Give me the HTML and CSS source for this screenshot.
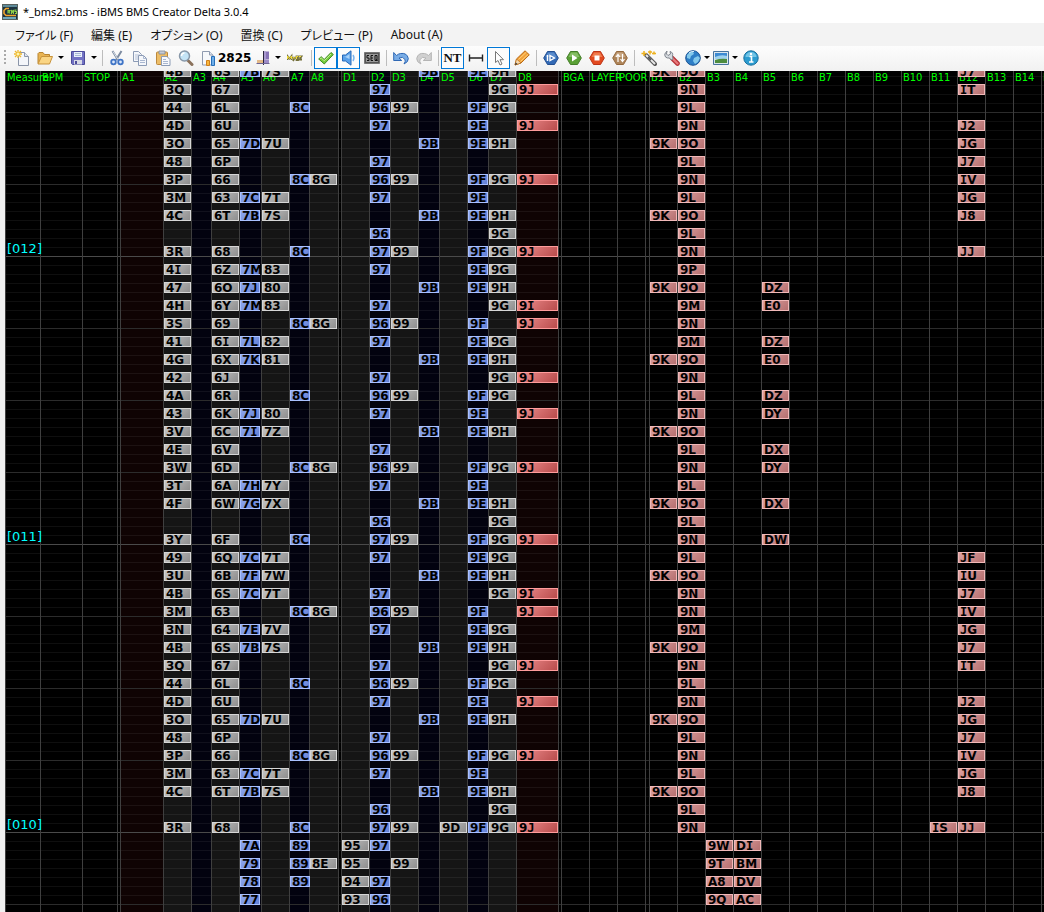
FILE: index.html
```html
<!DOCTYPE html>
<html lang="ja">
<head>
<meta charset="utf-8">
<title>iBMS BMS Creator Delta</title>
<link rel="stylesheet" href="styles.css">
</head>
<body>
<div class="app">
<header class="titlebar">
  <svg class="logo" viewBox="0 0 16 16"><rect width="16" height="16" fill="#1b3340"/><path d="M1 1h14v2H1z" fill="#5d8a99"/><path d="M1 13h13v2H1z" fill="#6ea9bf"/><rect x=".5" y=".5" width="15" height="15" fill="none" stroke="#59625f"/><path d="M7 4.500H4L2 6.500v3l2 2h10" fill="none" stroke="#f0a32c" stroke-width="1.600"/><path d="M6 9.500v-3h2l-1 1.500 1 1.500M9.500 10V6l1 2 1-2v4M14.500 6H13v1.500h1.500V9.500H13" fill="none" stroke="#8fcf4a" stroke-width="1.100"/></svg>
  <h1>*_bms2.bms - iBMS BMS Creator Delta 3.0.4</h1>
</header>
<nav class="menubar">
  <button>ファイル (F)</button><button>編集 (E)</button><button>オプション (O)</button><button>置換 (C)</button><button>プレビュー (P)</button><button>About (A)</button>
</nav>
<div class="toolbar" role="toolbar" aria-label="Main">
  <span class="grip"></span>
  <button class="tool" aria-label="New"><svg viewBox="0 0 16 16"><path d="M4.500 2.500h6l4 4v9h-10z" fill="#f4f6fa" stroke="#8b95a8"/><path d="M10.500 2.500v4h4" fill="#dfe5ee" stroke="#8b95a8"/><path d="M4 0v8M0 4h8M1 1l6 6M7 1L1 7" stroke="#efb92d" stroke-width="1.300"/><circle cx="4" cy="4" r="1.500" fill="#fff6b0"/></svg></button>
  <button class="tool" aria-label="Open"><svg viewBox="0 0 16 16"><path d="M1 13.500V3.500l1-1h4l1.500 2h5v3" fill="#e9b453" stroke="#b98532"/><path d="M1 14L4.500 6.500h11L12.500 14z" fill="#fad584" stroke="#c8933c"/></svg></button><button class="drop" aria-label="Recent files"></button>
  <button class="tool" aria-label="Save"><svg viewBox="0 0 16 16"><path d="M1.500 1.500h13v13h-12l-1-1z" fill="#7272c4" stroke="#4b4b99"/><path d="M4 2h8v5H4z" fill="#e9f0fa"/><path d="M5 3.500h6M5 5.500h6" stroke="#a8b8d4"/><path d="M4 10h8v4.500H4z" fill="#d8dae6"/><path d="M5 11h2v3H5z" fill="#4b4b99"/></svg></button><button class="drop" aria-label="Save options"></button>
  <span class="sep"></span>
  <button class="tool" aria-label="Cut"><svg viewBox="0 0 16 16"><path d="M3.500 1l5.500 9M12.500 1L7 10" stroke="#7d8ba0" stroke-width="2"/><path d="M4 1.500l5 8" stroke="#d9e1ea"/><circle cx="4.500" cy="12" r="2.300" fill="#dce8fa" stroke="#3f74c6" stroke-width="1.800"/><circle cx="11.500" cy="12" r="2.300" fill="#dce8fa" stroke="#3f74c6" stroke-width="1.800"/></svg></button>
  <button class="tool" aria-label="Copy"><svg viewBox="0 0 16 16"><path d="M1.500 1.500h5l3 3v7h-8z" fill="#f5f7fb" stroke="#8c9bb5"/><path d="M3 5h5M3 7h3M3 9h3" stroke="#b5c1d6"/><path d="M6.500 5.500h5l3 3v7h-8z" fill="#f5f7fb" stroke="#8c9bb5"/><path d="M11.500 5.500v3h3M8 10.500h5M8 12.500h5" fill="none" stroke="#a9b7d0"/></svg></button>
  <button class="tool" aria-label="Paste"><svg viewBox="0 0 16 16"><rect x="1.500" y="2" width="11" height="12.500" rx="1" fill="#edbd67" stroke="#bc883c"/><path d="M4 1h6v3H4z" fill="#c6cbd6" stroke="#818b9d" stroke-width=".8"/><path d="M6.500 6.500h5.500l3 3v6H6.500z" fill="#f8f9fc" stroke="#8c9bb5"/><path d="M8 9.500h3M8 11.500h5M8 13.500h5" stroke="#a9b7d0"/></svg></button>
  <button class="tool" aria-label="Find"><svg viewBox="0 0 16 16"><path d="M10 10.500l4 4" stroke="#8a715b" stroke-width="3" stroke-linecap="round"/><circle cx="6.500" cy="6" r="5" fill="#c4e4f6" stroke="#8797a8" stroke-width="1.500"/><path d="M3.500 6a3 3 0 0 1 3-3" fill="none" stroke="#fff" stroke-width="1.500"/></svg></button>
  <button class="tool stats" aria-label="Statistics 2825"><svg viewBox="0 0 16 16"><path d="M2.500 1.500h7l3.500 3.500v10h-10.500z" fill="#f6f8fb" stroke="#8f9bb0"/><path d="M9.500 1.500v3.500h3.500" fill="#dfe5ee" stroke="#8f9bb0"/><path d="M6.500 10.500h3v5h-3z" fill="#f8b73c" stroke="#cf7e1b"/><path d="M11.500 6.500h3v9h-3z" fill="#6faee8" stroke="#266fb9"/></svg><span>2825</span></button>
  <button class="tool narrow" aria-label="Note tool"><svg viewBox="0 0 16 16"><path d="M8 1.500h5v8H8z" fill="#8874b8"/><path d="M8 1.500h2v8H8z" fill="#a899cf"/><path d="M1 10h7v3H1z" fill="#e3b987"/><path d="M8 10h5v4H8z" fill="#9c8bc6"/><path d="M7.500 1v14" stroke="#28243c"/><path d="M.5 13.500h13" stroke="#6d6494"/></svg></button><button class="drop slim" aria-label="Note tool options"></button>
  <button class="tool wide" aria-label="My O2"><svg viewBox="0 0 16 16"><path d="M.5 10V6l2 2.500 2-2.500v4M6 7l1 2L8.500 7M7 9l-1 2M11 6.500H9.500V10H11zM12 6.500h2.500L12.500 9.500h2.500" fill="none" stroke="#74703c" stroke-width="1.800"/><path d="M.5 9V6l2 2.500 2-2.500v3M6 7l1 1.500L8.500 7M11 6.500H9.500V9M12 6.500h2" fill="none" stroke="#f2dc3c"/></svg></button>
  <span class="sep"></span>
  <button class="tool on" aria-label="Error check" aria-pressed="true"><svg viewBox="0 0 16 16"><path d="M.7 9l2.500-2.300 3 2.800L13 2.500l2.300 2-9 9.500z" fill="#78cd3c" stroke="#3e8c22"/><path d="M2 8.800l1.200-1 3 3L13 4" fill="none" stroke="#c0ed93"/></svg></button>
  <button class="tool on" aria-label="Preview on click" aria-pressed="true"><svg viewBox="0 0 16 16"><path d="M1.500 5h3L10 .8v14.400L4.500 11h-3z" fill="#5aa1ea" stroke="#2769b8"/><path d="M3 6.500h2L8.500 4v5z" fill="#a9d3fa"/><path d="M12 5q2 3 0 6" fill="none" stroke="#77b3ef" stroke-width="1.400"/></svg></button>
  <button class="tool" aria-label="Sequence"><svg viewBox="0 0 16 16"><path d="M.5 2.500h15v11H.5z" fill="#555" stroke="#777"/><path d="M2 4h12v8H2z" fill="#999"/><path d="M5 5.500H3v2.500h2v2.500H3M9 5.500H7v5h2M7 8h2M11 5.500h2v5h-2zM12 9l1.500 2" fill="none" stroke="#111"/></svg></button>
  <span class="sep"></span>
  <button class="tool" aria-label="Undo"><svg viewBox="0 0 16 16"><path d="M.7 2.500v8h8L6 8q4-2 6 1.500.8 2-1 4.500 4.500-2 4.300-5.500Q14 2.500 7.500 3.500q-2 .3-4 2z" fill="#78ace6" stroke="#2f68b4"/></svg></button>
  <button class="tool" aria-label="Redo"><svg viewBox="0 0 16 16"><path d="M15.300 2.500v8h-8L10 8Q6 6 4 9.500q-.8 2 1 4.500Q.5 12 .7 8.500 2 2.500 8.500 3.500q2 .3 4 2z" fill="#d0d0d0" stroke="#b5b5b5"/></svg></button>
  <span class="sep"></span>
  <button class="tool on nt" aria-pressed="true">NT</button>
  <button class="tool" aria-label="Snap"><svg viewBox="0 0 16 16"><path d="M1.500 4.500v7M14.500 4.500v7M2 8h12" stroke="#222" stroke-width="1.400"/></svg></button>
  <button class="tool on" aria-label="Select" aria-pressed="true"><svg viewBox="0 0 16 16"><path d="M4.500 1.500v11l2.500-2 2 4.500 2-1-2-4.300h3.500z" fill="#fff" stroke="#777"/></svg></button>
  <button class="tool" aria-label="Write"><svg viewBox="0 0 16 16"><path d="M1 15l1.500-6L11 .8l4.300 4L7 13z" fill="#f2a13a" stroke="#b96a16"/><path d="M4.500 9.500l8-7.500M6.500 11.500l7.500-7" stroke="#ffd17a"/><path d="M1 15l1.500-6 4.500 4z" fill="#f5dcb4" stroke="#b96a16" stroke-width=".7"/><path d="M1 15l.7-2.500L3.500 14z" fill="#333"/></svg></button>
  <span class="sep"></span>
  <button class="tool" aria-label="Play from start"><svg viewBox="0 0 16 16"><path d="M4.500 1.500h7L15.300 8l-3.800 6.500h-7L.7 8z" fill="#3269b5" stroke="#234f91"/><path d="M5 2.500h6L13.500 7h-11z" fill="#5a8ccc"/><path d="M4.500 5v6" stroke="#fff" stroke-width="1.500"/><path d="M7 5.500L11.500 8 7 10.500z" fill="none" stroke="#fff" stroke-width="1.400"/></svg></button>
  <button class="tool" aria-label="Play"><svg viewBox="0 0 16 16"><path d="M4.500 1.500h7L15.300 8l-3.800 6.500h-7L.7 8z" fill="#5aa035" stroke="#447e28"/><path d="M5 2.500h6L13.500 7h-11z" fill="#85be64"/><path d="M6 4.500L11.500 8 6 11.500z" fill="#fff"/></svg></button>
  <button class="tool" aria-label="Stop"><svg viewBox="0 0 16 16"><path d="M4.500 1.500h7L15.300 8l-3.800 6.500h-7L.7 8z" fill="#e24a20" stroke="#bd3416"/><path d="M5 2.500h6L13.500 7h-11z" fill="#ef7b4d"/><path d="M5.500 5.500h5v5h-5z" fill="#fff"/></svg></button>
  <button class="tool" aria-label="Transfer"><svg viewBox="0 0 16 16"><path d="M4.500 1.500h7L15.300 8l-3.800 6.500h-7L.7 8z" fill="#ae855a" stroke="#94683d"/><path d="M5 2.500h6L13.500 7h-11z" fill="#c8a681"/><path d="M6 12V5M4 7l2-2.500L8 7M10.500 4v7M8.500 9l2 2.500 2-2.500" fill="none" stroke="#fff" stroke-width="1.200"/></svg></button>
  <span class="sep"></span>
  <button class="tool" aria-label="Options wizard"><svg viewBox="0 0 16 16"><path d="M5 5l9 9" stroke="#555" stroke-width="4" stroke-linecap="round"/><path d="M5 5l9 9" stroke="#e8e8e8" stroke-width="2"/><path d="M7 7l3 3" stroke="#555" stroke-width="2"/><path d="M3 1v5M.5 3.500h5M7 2h4M9 .5v4M11 3.500h4M13 1.500v3" stroke="#eeb21f" stroke-width="1.500"/></svg></button>
  <button class="tool" aria-label="Settings"><svg viewBox="0 0 16 16"><path d="M8 8l5.500 5.500" stroke="#b53035" stroke-width="4.600" stroke-linecap="round"/><path d="M8 8l5.500 5.500" stroke="#e8777a" stroke-width="2.400" stroke-linecap="round"/><path d="M3 1l-.5 3L4 5.500 6.500 4 6 1.500q3.500 1 2.500 4.500L9 9 7 10 5.500 8Q.5 8.500.8 4z" fill="#d6dadf" stroke="#7f858e"/></svg></button>
  <button class="tool narrow" aria-label="Language"><svg viewBox="0 0 16 16"><circle cx="8" cy="8" r="7.300" fill="#2e7fc7" stroke="#1c5595"/><path d="M2 5q3-4 6-3l1 2-3 2-1 3-3-1zM9 8l4-2 2 2-2 4-3 2-2-3z" fill="#83c9ec"/><path d="M4 3q2-2 5-1.500" fill="none" stroke="#d9f1ff"/></svg></button><button class="drop slim" aria-label="Language list"></button>
  <button class="tool narrow" aria-label="Theme"><svg viewBox="0 0 16 16"><path d="M.5 1.500h15v13H.5z" fill="#dbe7ef" stroke="#47749e"/><path d="M2 3h12v6H2z" fill="#3d8bd3"/><path d="M2 7q6-3 12-1v3H2z" fill="#9ed2ef"/><path d="M2 10q6-2 12-1v4H2z" fill="#4d8c3e"/></svg></button><button class="drop slim" aria-label="Theme list"></button>
  <button class="tool" aria-label="About"><svg viewBox="0 0 16 16"><circle cx="8" cy="8" r="7.200" fill="#2c9cd0" stroke="#186f9e"/><path d="M2.500 7a5.500 5 0 0 1 11 0" fill="#71c4e6"/><path d="M6.500 6.500H8.500v5M6 12h4.500" fill="none" stroke="#fff" stroke-width="1.600"/><circle cx="8" cy="3.900" r="1.200" fill="#fff"/></svg></button>
</div>
<main class="editor"><div class="board" id="board"></div></main>
</div>
<script src="board.js"></script>
</body>
</html>
```
FILE: styles.css
```css
* { box-sizing: border-box; }
body { margin: 0; font-family: "Open Sans", "Noto Sans CJK JP", sans-serif; background: #f0f0f0; }
button { border: 0; margin: 0; padding: 0; background: none; color: inherit; font: inherit; }
.app { display: flex; flex-direction: column; height: 100vh; overflow: hidden; }

.titlebar { display: flex; align-items: center; gap: 5px; height: 23px; padding-left: 2px; background: #fff; flex: none; }
.logo { width: 16px; height: 16px; }
.titlebar h1 { margin: 0; font-size: 11px; font-weight: 400; color: #000; font-family: "Noto Sans", sans-serif; }

.menubar { display: flex; align-items: center; height: 23px; padding-left: 15px; gap: 18px; background: #f3f3f3; font-family: "Noto Sans", "Noto Sans CJK JP", sans-serif; font-size: 12px; font-feature-settings: "palt"; color: #111; flex: none; }
.menubar button { white-space: nowrap; font-feature-settings: inherit; }

.toolbar { display: flex; align-items: center; height: 25px; padding-bottom: 2px; background: linear-gradient(#fdfdfd, #f1f1f1); flex: none; }
.grip { width: 3px; height: 16px; margin: 0 3px 0 4px; background: radial-gradient(circle at 1px 1px, #aaa 1px, transparent 1px) 0 0 / 3px 4px; }
.tool { display: flex; align-items: center; justify-content: center; width: 23px; height: 22px; flex: none; }
.tool svg { width: 16px; height: 16px; flex: none; }
.narrow { width: 20px; }
.wide { width: 26px; }
.stats { width: 57px; justify-content: flex-start; padding-left: 3px; gap: 2px; font: bold 12px "DejaVu Sans", sans-serif; color: #000; }
.on { border: 1px solid #0078d7; background: #fcfcfc; }
.nt { font: bold 13px "Liberation Serif", serif; color: #111; }
.drop { display: flex; align-items: center; justify-content: center; width: 10px; height: 22px; flex: none; }
.drop::before { content: ""; border: 3px solid transparent; border-top-color: #000; border-bottom: 0; }
.slim { width: 8px; }
.sep { width: 6px; height: 16px; background: linear-gradient(#bdbdbd, #bdbdbd) center / 1px 100% no-repeat; flex: none; }

.editor { flex: 1; min-height: 0; margin-left: 5px; overflow: hidden; background: #000; }
/* The view is scrolled a few pixels into its first row. */
.board { display: flex; margin-top: -5px; min-width: max-content; }

.col {
  display: grid;
  grid-template-columns: minmax(0, 1fr);
  grid-template-rows: repeat(48, 18px);
  flex: none;
  border-left: 1px solid #3f3f3f;
  background-color: #000;
  background-image:
    linear-gradient(#4a4a4a 1px, transparent 1px),
    linear-gradient(#2c2c2c 1px, transparent 1px),
    linear-gradient(rgba(255, 255, 255, .06) 1px, transparent 1px);
  background-size: 100% 288px, 100% 72px, 100% 9px;
  background-position: 0 190px, 0 46px, 0 1px;
}
.w-gap { width: 3px; }
.w-gap-wide { width: 4px; }
.w-slim { width: 20px; }
.w-key { width: 21px; }
.w-black { width: 22px; }
.w-mid { width: 28px; }
.w-mid-wide { width: 29px; }
.w-measure { width: 35px; }
.w-tempo { width: 42px; }
.w-scratch { width: 43px; }
.grey { background-color: #151515; }
.blue { background-color: #02020f; }
.red { background-color: #0f0303; }

.head { grid-area: 1 / 1; align-self: end; z-index: 1; padding-left: 1px; font: 11px/12px "DejaVu Sans Condensed", "DejaVu Sans", sans-serif; color: #0f0; white-space: nowrap; }
.measure { grid-column: 1; z-index: 1; line-height: 6px; padding-left: 1px; font-family: "DejaVu Sans", sans-serif; font-size: 13px; color: #0ff; white-space: nowrap; }

.note {
  grid-column: 1;
  z-index: 2;
  height: 11px;
  padding-left: 1px;
  border: 1px solid;
  white-space: nowrap;
  font: bold 12px/10px "DejaVu Sans", sans-serif;
  color: #000;
}
/* Crossbar forms of I and J */
.slab { font-family: "DejaVu Sans Mono", monospace; line-height: 1px; }
.note-grey { width: 27px; border-color: #d6d6d6; background: linear-gradient(135deg, #c6c6c6, #8e8e8e); }
.note-blue { width: 20px; border-color: #a9c0ff; background: linear-gradient(135deg, #8fa8ec, #6480d6); }
.note-red { width: 41px; border-color: #ff9c9c; background: linear-gradient(135deg, #f09090, #b84c4c); }
.note-pink { width: 27px; border-color: #f1b9b9; background: linear-gradient(135deg, #dfa3a3, #b57070); }
```
FILE: board.js
```js
// Column: [title, width class, shade class, note class]
const columns = [
  ["Measure", "w-measure", "", ""], ["BPM", "w-tempo", "", ""], ["STOP", "w-measure", "", ""], ["", "w-gap", "", ""],
  ["A1", "w-scratch", "red", "note-red"], ["A2", "w-mid", "grey", "note-grey"], ["A3", "w-slim", "blue", "note-blue"],
  ["A4", "w-mid", "grey", "note-grey"], ["A5", "w-black", "blue", "note-blue"], ["A6", "w-mid", "grey", "note-grey"],
  ["A7", "w-slim", "blue", "note-blue"], ["A8", "w-mid-wide", "grey", "note-grey"], ["", "w-gap", "", ""],
  ["D1", "w-mid", "grey", "note-grey"], ["D2", "w-key", "blue", "note-blue"], ["D3", "w-mid", "grey", "note-grey"],
  ["D4", "w-key", "blue", "note-blue"], ["D5", "w-mid", "grey", "note-grey"], ["D6", "w-key", "blue", "note-blue"],
  ["D7", "w-mid", "grey", "note-grey"], ["D8", "w-tempo", "red", "note-red"], ["", "w-gap", "", ""],
  ["BGA", "w-mid", "", ""], ["LAYER", "w-mid", "", ""], ["POOR", "w-mid", "", ""], ["", "w-gap-wide", "", ""]
];
for (let n = 1; n <= 24; n++) columns.push(["B" + n, "w-mid", "", "note-pink"]);

// Phrase shared by two measures
const phrase = [
  "A2 3Q A4 67 D2 97 D7 9G D8 9J B2 9N B12 IT",
  "A2 44 A4 6L A7 8C D2 96 D3 99 D6 9F D7 9G B2 9L",
  "A2 4D A4 6U D2 97 D6 9E D8 9J B2 9N B12 J2",
  "A2 3O A4 65 A5 7D A6 7U D4 9B D6 9E D7 9H B1 9K B2 9O B12 JG",
  "A2 48 A4 6P D2 97 B2 9L B12 J7",
  "A2 3P A4 66 A7 8C A8 8G D2 96 D3 99 D6 9F D7 9G D8 9J B2 9N B12 IV",
  "A2 3M A4 63 A5 7C A6 7T D2 97 D6 9E B2 9L B12 JG",
  "A2 4C A4 6T A5 7B A6 7S D4 9B D6 9E D7 9H B1 9K B2 9O B12 J8",
  "D2 96 D7 9G B2 9L",
  "A2 3R A4 68 A7 8C D2 97 D3 99 D6 9F D7 9G D8 9J B2 9N B12 JJ"
];
const rows = [
  "A2 4B A4 6S A5 7B A6 7S D4 9B D6 9E D7 9H B1 9K B2 9O B12 J7",
  ...phrase,
  "A2 4I A4 6Z A5 7M A6 83 D2 97 D6 9E D7 9G B2 9P",
  "A2 47 A4 6O A5 7J A6 80 D4 9B D6 9E D7 9H B1 9K B2 9O B5 DZ",
  "A2 4H A4 6Y A5 7M A6 83 D2 97 D7 9G D8 9I B2 9M B5 E0",
  "A2 3S A4 69 A7 8C A8 8G D2 96 D3 99 D6 9F D8 9J B2 9N",
  "A2 41 A4 6I A5 7L A6 82 D2 97 D6 9E D7 9G B2 9M B5 DZ",
  "A2 4G A4 6X A5 7K A6 81 D4 9B D6 9E D7 9H B1 9K B2 9O B5 E0",
  "A2 42 A4 6J D2 97 D7 9G D8 9J B2 9N",
  "A2 4A A4 6R A7 8C D2 96 D3 99 D6 9F D7 9G B2 9L B5 DZ",
  "A2 43 A4 6K A5 7J A6 80 D2 97 D6 9E D8 9J B2 9N B5 DY",
  "A2 3V A4 6C A5 7I A6 7Z D4 9B D6 9E D7 9H B1 9K B2 9O",
  "A2 4E A4 6V D2 97 B2 9L B5 DX",
  "A2 3W A4 6D A7 8C A8 8G D2 96 D3 99 D6 9F D7 9G D8 9J B2 9N B5 DY",
  "A2 3T A4 6A A5 7H A6 7Y D2 97 D6 9E B2 9L",
  "A2 4F A4 6W A5 7G A6 7X D4 9B D6 9E D7 9H B1 9K B2 9O B5 DX",
  "D2 96 D7 9G B2 9L",
  "A2 3Y A4 6F A7 8C D2 97 D3 99 D6 9F D7 9G D8 9J B2 9N B5 DW",
  "A2 49 A4 6Q A5 7C A6 7T D2 97 D6 9E D7 9G B2 9L B12 JF",
  "A2 3U A4 6B A5 7F A6 7W D4 9B D6 9E D7 9H B1 9K B2 9O B12 IU",
  "A2 4B A4 6S A5 7C A6 7T D2 97 D7 9G D8 9I B2 9N B12 J7",
  "A2 3M A4 63 A7 8C A8 8G D2 96 D3 99 D6 9F D8 9J B2 9N B12 IV",
  "A2 3N A4 64 A5 7E A6 7V D2 97 D6 9E D7 9G B2 9M B12 JG",
  "A2 4B A4 6S A5 7B A6 7S D4 9B D6 9E D7 9H B1 9K B2 9O B12 J7",
  ...phrase.slice(0, 9),
  "A2 3R A4 68 A7 8C D2 97 D3 99 D5 9D D6 9F D7 9G D8 9J B2 9N B11 IS B12 JJ",
  "A5 7A A7 89 D1 95 D2 97 B3 9W B4 DI",
  "A5 79 A7 89 A8 8E D1 95 D3 99 B3 9T B4 BM",
  "A5 78 A7 89 D1 94 D2 97 B3 A8 B4 DV",
  "A5 77 D1 93 D2 96 B3 9Q B4 AC"
];
const measures = { 10: "[012]", 26: "[011]", 42: "[010]" };

const board = document.getElementById("board");
const byTitle = {};

function add(parent, className, text, row) {
  const el = document.createElement("div");
  el.className = className;
  el.textContent = text;
  if (row !== undefined) el.style.gridRow = row + 1;
  parent.append(el);
  return el;
}

for (const [title, width, shade, note] of columns) {
  const col = add(board, `col ${width} ${shade}`, "");
  if (title) {
    add(col, "head", title);
    byTitle[title] = { col, note };
  }
}
rows.forEach((line, row) => {
  const parts = line.split(" ");
  for (let i = 0; i < parts.length; i += 2) {
    const { col, note } = byTitle[parts[i]];
    const el = add(col, `note ${note}`, "", row);
    el.innerHTML = parts[i + 1].replace(/[IJ]/g, '<span class="slab">$&</span>');
  }
});
for (const row in measures) add(byTitle.Measure.col, "measure", measures[row], Number(row));
```
